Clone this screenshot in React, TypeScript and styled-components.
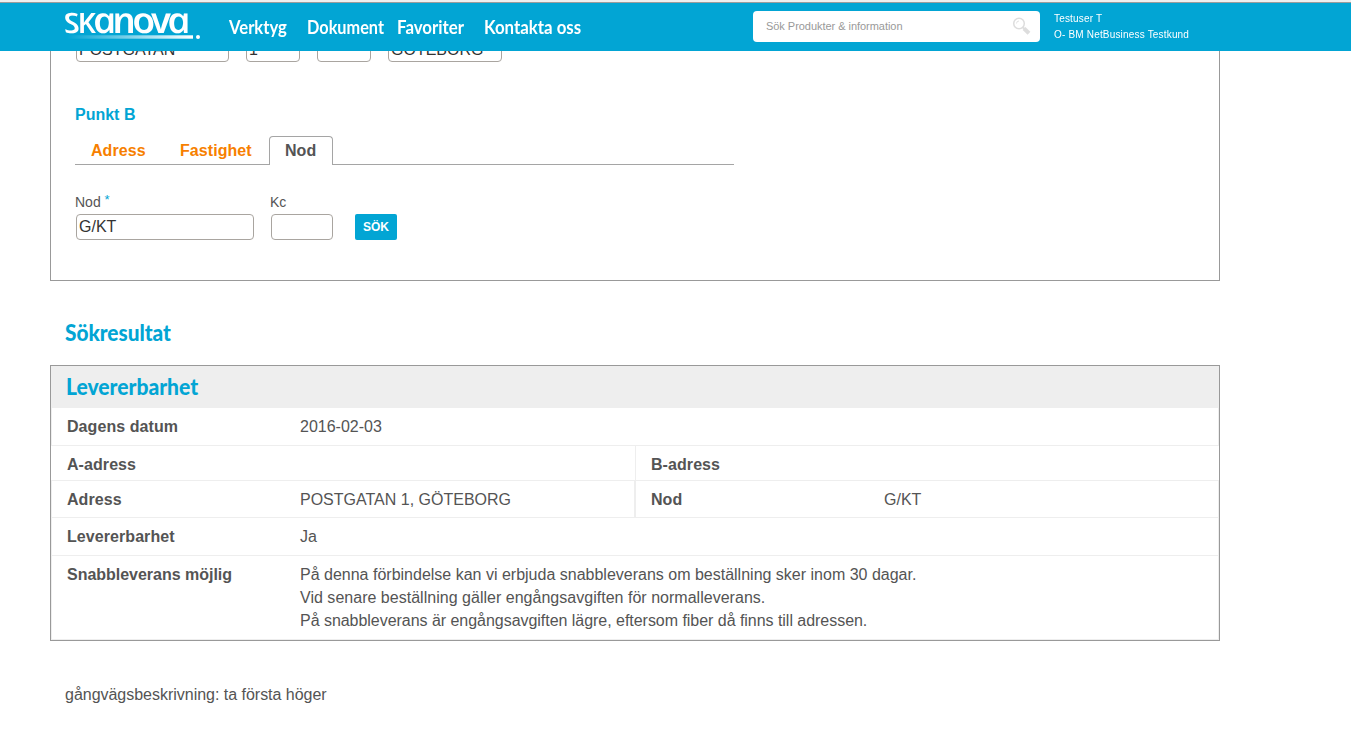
import React from "react";
import styled, { createGlobalStyle } from "styled-components";

const GlobalStyle = createGlobalStyle`
  * { box-sizing: border-box; }
  body {
    margin: 0;
    background: #fff;
    color: #545454;
    font: 16px/23px "Liberation Sans", Arial, sans-serif;
    overflow: hidden;
  }
`;

const Header = styled.header`
  position: fixed;
  inset: 0 0 auto 0;
  height: 51px;
  display: flex;
  background: #02a5d4;
  border-top: 2px solid #efefef;
  box-shadow: inset 0 1px 0 #9c9c9c;
  padding-left: 65px;
  z-index: 2;
  color: #fff;
`;

const Logo = styled.svg`
  width: 136px;
  height: 49px;
  overflow: visible;
  flex: none;
`;

const Nav = styled.nav`
  display: flex;
  width: 524px;
  margin-left: 28px;
  padding-top: 14px;
`;

const Display = styled.span<{ $scale: number; $weight?: number }>`
  display: block;
  width: max-content;
  font-family: Lato, sans-serif;
  font-weight: ${(p) => p.$weight ?? 700};
  transform: scaleX(${(p) => p.$scale});
  transform-origin: 0 50%;
`;

const NavLink = styled.a<{ $width: number }>`
  flex: none;
  width: ${(p) => p.$width}px;
  font-size: 18.5px;
  line-height: 23px;
`;

const Search = styled.div`
  display: flex;
  align-items: center;
  justify-content: space-between;
  width: 287px;
  height: 31px;
  margin-top: 9px;
  padding: 0 9px 0 13px;
  border-radius: 4px;
  background: #fff;
  color: #999;
  font-size: 11px;
  letter-spacing: -0.04px;
`;

const User = styled.div`
  margin: 9px 0 0 14px;
  font-size: 10px;
  line-height: 16px;
  letter-spacing: 0.18px;
`;

const Page = styled.main`
  width: 1170px;
  margin-left: 50px;
`;

const FormPanel = styled.section`
  height: 281px;
  padding: 36px 24px 0;
  border: 1px solid #999;
  border-top: 0;
`;

const AddressRow = styled.div`
  display: flex;
  gap: 17px;
  padding-left: 1px;
`;

const Field = styled.div<{ $width: number }>`
  width: ${(p) => p.$width}px;
  height: 26px;
  padding-left: 2px;
  border: 1px solid #a9a5a0;
  border-radius: 4px;
  background: #fff;
  color: #333;
  line-height: 26px;
`;

const PointTitle = styled.h3`
  margin: 41px 0 10px;
  color: #02a5d4;
  font-size: 16px;
  line-height: 23px;
`;

const Tabs = styled.div`
  display: flex;
  width: 659px;
  height: 29px;
  border-bottom: 1px solid #a5a5a5;
`;

const Tab = styled.div<{ $active?: boolean; $width: number }>`
  width: ${(p) => p.$width}px;
  height: 29px;
  padding-left: ${(p) => (p.$active ? 15 : 16)}px;
  border: ${(p) => (p.$active ? "1px solid #a5a5a5" : "0")};
  border-bottom: 0;
  border-radius: 4px 4px 0 0;
  background: ${(p) => (p.$active ? "#fff" : "transparent")};
  color: ${(p) => (p.$active ? "#545454" : "#f77f00")};
  font-weight: bold;
  letter-spacing: 0.06px;
  line-height: ${(p) => (p.$active ? 27 : 29)}px;
`;

const NodeRow = styled.div`
  display: flex;
  align-items: flex-end;
  margin-top: 27px;
`;

const LabelledField = styled.label<{ $width: number }>`
  width: ${(p) => p.$width}px;
  font-size: 14px;
  line-height: 20px;

  ${Field} {
    margin: 2px 0 0 1px;
    font-size: 16px;
    line-height: 24px;
  }
`;

const Required = styled.span`
  color: #02a5d4;
  font-size: 13px;
  line-height: 0;
  vertical-align: 3px;
`;

const Button = styled.button`
  width: 42px;
  height: 26px;
  padding: 0;
  border: 0;
  border-radius: 2px;
  background: #02a5d4;
  color: #fff;
  font: bold 12px "Liberation Sans", Arial, sans-serif;
`;

const Heading = styled.h2`
  margin: 38px 0 19px 15px;
  color: #02a5d4;
  font-size: 22px;
  line-height: 27px;
`;

const Results = styled.section`
  height: 276px;
  border: 1px solid #999;
`;

const ResultsTitle = styled.h2`
  height: 42px;
  margin: 0;
  padding: 7px 0 0 15px;
  background: #eee;
  color: #02a5d4;
  font-size: 22px;
  line-height: 27px;
`;

const Row = styled.div<{ $height: number; $open?: boolean }>`
  display: flex;
  height: ${(p) => p.$height}px;
  border: solid #eee;
  border-width: 0 ${(p) => (p.$open ? 0 : 1)}px 1px;
  padding: 0 ${(p) => (p.$open ? 1 : 0)}px;
`;

const Half = styled.div<{ $width: number; $rule?: number }>`
  display: flex;
  width: ${(p) => p.$width}px;
  border-right: ${(p) => p.$rule ?? 0}px solid #eee;
`;

const Term = styled.div<{ $tight?: boolean }>`
  width: 248px;
  padding: 7px 0 0 15px;
  font-weight: bold;
  letter-spacing: ${(p) => (p.$tight ? -0.02 : 0.07)}px;
`;

const Value = styled.div`
  padding-top: 7px;
`;

const Line = styled.div<{ $tracking?: number }>`
  letter-spacing: ${(p) => p.$tracking ?? 0}px;
`;

const Note = styled.p`
  margin: 42px 0 0 15px;
  letter-spacing: -0.02px;
`;

const links = [
  { label: "Verktyg", width: 78, scale: 0.9 },
  { label: "Dokument", width: 90, scale: 0.88 },
  { label: "Favoriter", width: 87, scale: 0.91 },
  { label: "Kontakta oss", width: 110, scale: 0.91 },
];

export default function App() {
  return (
    <>
      <GlobalStyle />
      <Header>
        <Logo viewBox="0 0 136 49" aria-label="skanova">
          <defs>
            <linearGradient id="swoosh">
              <stop offset="0" stopColor="#fff" stopOpacity="0" />
              <stop offset="1" stopColor="#fff" />
            </linearGradient>
          </defs>
          <text
            transform="translate(0.5 31) skewX(13.4) scale(1.12 1)"
            fill="#fff"
            fontFamily="'Open Sans', sans-serif"
            fontStyle="italic"
            fontWeight="600"
          >
            <tspan fontSize="28" letterSpacing="-2.2">SK</tspan>
            <tspan fontSize="36" letterSpacing="-3.5">anova</tspan>
          </text>
          <rect x="2" y="33.3" width="126" height="3.4" fill="url(#swoosh)" />
          <circle cx="133" cy="35" r="2" fill="#fff" />
        </Logo>
        <Nav>
          {links.map((l) => (
            <NavLink key={l.label} $width={l.width}>
              <Display $scale={l.scale}>{l.label}</Display>
            </NavLink>
          ))}
        </Nav>
        <Search>
          Sök Produkter &amp; information
          <svg width="19" height="19" viewBox="0 0 19 19" fill="none">
            <circle cx="7" cy="6.5" r="5.3" stroke="#ddd" strokeWidth="1.5" />
            <path d="M4.5 6.5a2.5 2.5 0 0 1 2.5-2.5" stroke="#e3e3e3" />
            <path d="M11 10.5l1.5 1.5" stroke="#ddd" strokeWidth="2" />
            <path d="M12 11.5l5 4.7" stroke="#ddd" strokeWidth="4" />
          </svg>
        </Search>
        <User>
          <div>Testuser T</div>
          <div>O- BM NetBusiness Testkund</div>
        </User>
      </Header>
      <Page>
        <FormPanel>
          <AddressRow>
            <Field $width={153}>POSTGATAN</Field>
            <Field $width={54}>1</Field>
            <Field $width={54} />
            <Field $width={114}>GÖTEBORG</Field>
          </AddressRow>
          <PointTitle>Punkt B</PointTitle>
          <Tabs>
            <Tab $width={89}>Adress</Tab>
            <Tab $width={105}>Fastighet</Tab>
            <Tab $width={64} $active>Nod</Tab>
          </Tabs>
          <NodeRow>
            <LabelledField $width={195}>
              Nod <Required>*</Required>
              <Field $width={178}>G/KT</Field>
            </LabelledField>
            <LabelledField $width={85}>
              Kc
              <Field $width={62} />
            </LabelledField>
            <Button>SÖK</Button>
          </NodeRow>
        </FormPanel>
        <Heading>
          <Display $scale={0.945} $weight={900}>Sökresultat</Display>
        </Heading>
        <Results>
          <ResultsTitle>
            <Display $scale={0.955} $weight={900}>Levererbarhet</Display>
          </ResultsTitle>
          <Row $height={38}>
            <Term>Dagens datum</Term>
            <Value>2016-02-03</Value>
          </Row>
          <Row $height={35} $open>
            <Half $width={584} $rule={1}>
              <Term>A-adress</Term>
            </Half>
            <Term>B-adress</Term>
          </Row>
          <Row $height={37}>
            <Half $width={584} $rule={2}>
              <Term>Adress</Term>
              <Value>POSTGATAN 1, GÖTEBORG</Value>
            </Half>
            <Term>Nod</Term>
            <Value>G/KT</Value>
          </Row>
          <Row $height={38}>
            <Term>Levererbarhet</Term>
            <Value>Ja</Value>
          </Row>
          <Row $height={84}>
            <Term $tight>Snabbleverans möjlig</Term>
            <Value>
              <Line>På denna förbindelse kan vi erbjuda snabbleverans om beställning sker inom 30 dagar.</Line>
              <Line $tracking={0.02}>Vid senare beställning gäller engångsavgiften för normalleverans.</Line>
              <Line $tracking={-0.035}>På snabbleverans är engångsavgiften lägre, eftersom fiber då finns till adressen.</Line>
            </Value>
          </Row>
        </Results>
        <Note>gångvägsbeskrivning: ta första höger</Note>
      </Page>
    </>
  );
}
